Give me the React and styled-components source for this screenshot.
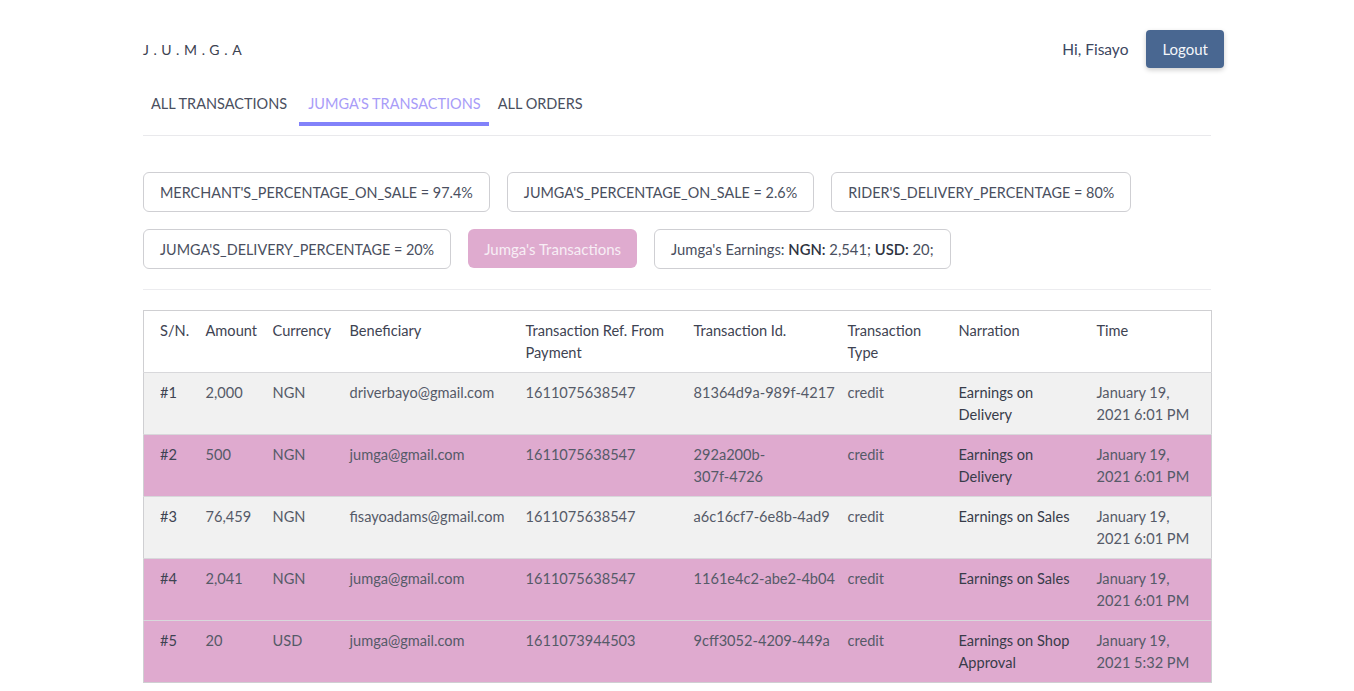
import React from "react";
import styled, { createGlobalStyle } from "styled-components";

const Global = createGlobalStyle`
  html, body { margin: 0; padding: 0; background: #fff; }
  body { font-family: Lato, "Open Sans", Arial, sans-serif; color: #4a4f5c; }
  * { box-sizing: border-box; }
`;

const Page = styled.div`
  width: 1068px;
  margin: 0 auto;
  padding-top: 30px;
`;

const Header = styled.header`
  display: flex;
  align-items: center;
  justify-content: space-between;
  margin-right: -13px;
  height: 38px;
`;

const Brand = styled.div`
  font-size: 14px;
  letter-spacing: 4.7px;
  color: #3c4250;
`;

const UserBox = styled.div`
  display: flex;
  align-items: center;
  gap: 18px;
`;

const Greeting = styled.span`
  font-size: 15.5px;
  color: #3c4660;
`;

const LogoutBtn = styled.button`
  height: 38px;
  padding: 0 16px;
  border: none;
  border-radius: 4px;
  background: #496791;
  color: #f4f6fa;
  font-family: inherit;
  font-size: 15px;
  box-shadow: 0 2px 5px rgba(0, 0, 0, 0.2);
`;

const Tabs = styled.nav`
  display: flex;
  margin-top: 16px;
  border-bottom: 1px solid #e9e9ec;
  height: 52px;
`;

const Tab = styled.div`
  padding: 0 8px 0 ${(p) => (p.$first ? "8px" : "9px")};
  margin-right: ${(p) => (p.$first ? "4px" : "0")};
  height: 38px;
  display: flex;
  align-items: center;
  font-size: 14.5px;
  color: ${(p) => (p.$active ? "#a89cf8" : "#4a4f60")};
  border-bottom: 4px solid ${(p) => (p.$active ? "#8282fa" : "transparent")};
  box-sizing: content-box;
`;

const Chips = styled.div`
  display: flex;
  flex-wrap: wrap;
  gap: 17px;
  padding: 36px 0 20px;
  border-bottom: 1px solid #ececef;
`;

const Chip = styled.div`
  height: 40px;
  padding: 0 16px;
  display: flex;
  align-items: center;
  border: 1px solid #cfcfd3;
  border-radius: 6px;
  font-size: ${(p) => p.$size || "14.4px"};
  color: #4a4f60;
  background: #fff;
  b { font-weight: 600; color: #2e3340; }
`;

const PinkBtn = styled.div`
  height: 39px;
  padding: 0 16px;
  display: flex;
  align-items: center;
  border-radius: 6px;
  background: #dfabcf;
  color: #f7eef5;
  font-size: 15px;
`;

const Table = styled.table`
  width: 100%;
  margin-top: 20px;
  border-collapse: collapse;
  table-layout: fixed;
  border: 1px solid #cfcfd2;
  font-size: 14.6px;
  line-height: 22px;
`;

const Th = styled.th`
  text-align: left;
  font-weight: 400;
  vertical-align: top;
  padding: 9px 2px 8px 8px;
  color: #3e4352;
  &:first-child { padding-left: 16px; }
  &:last-child { padding-right: 12px; }
`;

const Row = styled.tr`
  background: ${(p) => (p.$pink ? "#dfaacf" : "#f1f1f1")};
  border-top: 1px solid #d8d8db;
`;

const Td = styled.td`
  vertical-align: top;
  padding: 9px 2px 8px 8px;
  height: 61px;
  white-space: pre-line;
  color: ${(p) => (p.$dark ? "#383c4a" : "#555a68")};
  &:first-child { padding-left: 16px; color: #3e4352; }
  &:last-child { padding-right: 12px; }
`;

const rows = [
  ["#1", "2,000", "NGN", "driverbayo@gmail.com", "1611075638547", "81364d9a-989f-4217", "credit", "Earnings on Delivery", "January 19, 2021 6:01 PM"],
  ["#2", "500", "NGN", "jumga@gmail.com", "1611075638547", "292a200b-\n307f-4726", "credit", "Earnings on Delivery", "January 19, 2021 6:01 PM"],
  ["#3", "76,459", "NGN", "fisayoadams@gmail.com", "1611075638547", "a6c16cf7-6e8b-4ad9", "credit", "Earnings on Sales", "January 19, 2021 6:01 PM"],
  ["#4", "2,041", "NGN", "jumga@gmail.com", "1611075638547", "1161e4c2-abe2-4b04", "credit", "Earnings on Sales", "January 19, 2021 6:01 PM"],
  ["#5", "20", "USD", "jumga@gmail.com", "1611073944503", "9cff3052-4209-449a", "credit", "Earnings on Shop Approval", "January 19, 2021 5:32 PM"],
];

const widths = [54, 67, 77, 176, 168, 154, 111, 138, 123];
const heads = ["S/N.", "Amount", "Currency", "Beneficiary", "Transaction Ref. From Payment", "Transaction Id.", "Transaction Type", "Narration", "Time"];

export default function App() {
  return (
    <>
      <Global />
      <Page>
        <Header>
          <Brand>J.U.M.G.A</Brand>
          <UserBox>
            <Greeting>Hi, Fisayo</Greeting>
            <LogoutBtn>Logout</LogoutBtn>
          </UserBox>
        </Header>
        <Tabs>
          <Tab $first>ALL TRANSACTIONS</Tab>
          <Tab $active>JUMGA'S TRANSACTIONS</Tab>
          <Tab>ALL ORDERS</Tab>
        </Tabs>
        <Chips>
          <Chip>MERCHANT'S_PERCENTAGE_ON_SALE = 97.4%</Chip>
          <Chip>JUMGA'S_PERCENTAGE_ON_SALE = 2.6%</Chip>
          <Chip>RIDER'S_DELIVERY_PERCENTAGE = 80%</Chip>
          <Chip>JUMGA'S_DELIVERY_PERCENTAGE = 20%</Chip>
          <PinkBtn>Jumga's Transactions</PinkBtn>
          <Chip $size="14.8px">
            Jumga's Earnings:&nbsp;<b>NGN:</b>&nbsp;2,541;&nbsp;<b>USD:</b>&nbsp;20;
          </Chip>
        </Chips>
        <Table>
          <colgroup>
            {widths.map((w, i) => (
              <col key={i} style={{ width: w }} />
            ))}
          </colgroup>
          <thead>
            <tr>
              {heads.map((h) => (
                <Th key={h}>{h}</Th>
              ))}
            </tr>
          </thead>
          <tbody>
            {rows.map((r, i) => (
              <Row key={r[0]} $pink={i % 2 === 1 || i === 4}>
                {r.map((c, j) => (
                  <Td key={j} $dark={j === 7}>
                    {c}
                  </Td>
                ))}
              </Row>
            ))}
          </tbody>
        </Table>
      </Page>
    </>
  );
}
